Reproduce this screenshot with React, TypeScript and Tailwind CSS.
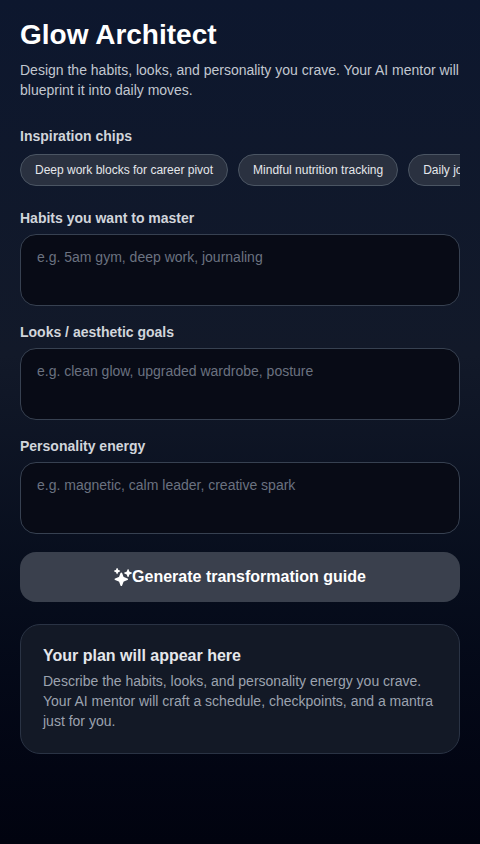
import { IoSparkles } from 'react-icons/io5';

const chips = ['Deep work blocks for career pivot', 'Mindful nutrition tracking', 'Daily journaling ritual'];

const fields = [
  { label: 'Habits you want to master', placeholder: 'e.g. 5am gym, deep work, journaling' },
  { label: 'Looks / aesthetic goals', placeholder: 'e.g. clean glow, upgraded wardrobe, posture' },
  { label: 'Personality energy', placeholder: 'e.g. magnetic, calm leader, creative spark' },
];

export default function App() {
  return (
    <div className="h-[844px] overflow-hidden bg-gradient-to-b from-[#0d172e] via-[#121929] via-[42%] to-[#01030f] p-5 font-['Liberation_Sans',Arial,sans-serif]">
      <h1 className="text-[28px] leading-[30px] font-bold text-white">Glow Architect</h1>
      <p className="mt-2.5 text-sm leading-5 text-[#c2c7d0]">
        Design the habits, looks, and personality you crave. Your AI mentor will blueprint it into daily moves.
      </p>

      <div className="mt-[26px] text-sm leading-5 font-semibold text-[#d1d5db]">Inspiration chips</div>
      <div className="mt-2 flex gap-2.5 overflow-hidden">
        {chips.map((chip) => (
          <div
            key={chip}
            className="flex h-8 shrink-0 items-center rounded-full border border-[#4b5563] bg-[#2a3140] px-[14px] text-xs whitespace-nowrap text-[#e5e7eb]"
          >
            {chip}
          </div>
        ))}
      </div>

      <div className="mt-[22px] flex flex-col gap-4">
        {fields.map((field) => (
          <div key={field.label}>
            <div className="mb-1.5 text-sm leading-5 font-semibold text-[#d1d5db]">{field.label}</div>
            <textarea
              readOnly
              placeholder={field.placeholder}
              className="block h-[72px] w-full resize-none rounded-2xl border border-[#374151] bg-[#080b16] px-4 py-3 text-sm leading-[20px] text-white outline-none placeholder:text-[#6b7280]"
            />
          </div>
        ))}
      </div>

      <button className="mt-[18px] flex h-[50px] w-full items-center justify-center rounded-2xl bg-[#3a404d] text-base font-semibold text-white">
        <IoSparkles size={18} />
        Generate transformation guide
      </button>

      <div className="mt-[22px] rounded-[20px] border border-[#2a3344] bg-[#131926] px-[22px] pt-[20px] pb-[22px]">
        <h2 className="text-base leading-[22px] font-semibold text-[#e5e7eb]">Your plan will appear here</h2>
        <p className="mt-1 text-sm leading-5 text-[#9ca3af]">
          Describe the habits, looks, and personality energy you crave. Your AI mentor will craft a schedule, checkpoints, and a mantra just for you.
        </p>
      </div>
    </div>
  );
}
